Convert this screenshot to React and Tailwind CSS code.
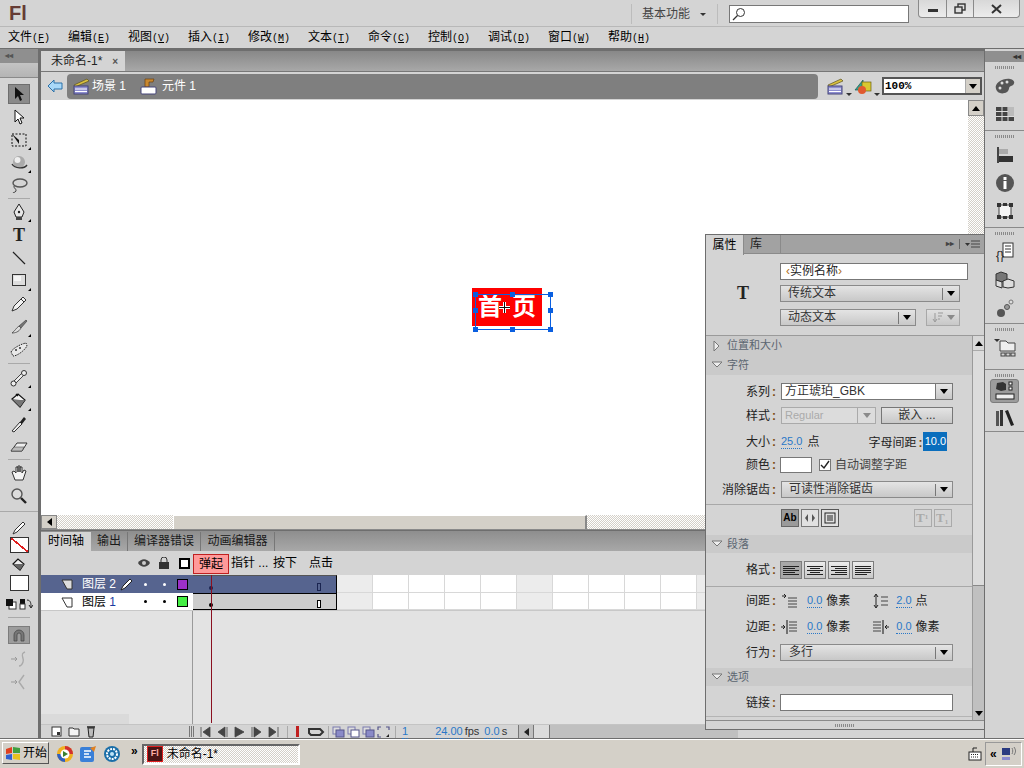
import React from 'react';

const FONT = '"Liberation Sans","Noto Sans CJK SC",sans-serif';
const dither = 'bg-[repeating-conic-gradient(#d4d0c8_0_25%,#ffffff_0_50%)] bg-[length:2px_2px]';

const I = ({ w = 20, h = 20, className = '', children }) => (
  <svg width={w} height={h} viewBox={`0 0 ${w} ${h}`} className={`shrink-0 ${className}`}>{children}</svg>
);

const Tool = ({ on, more, children }) => (
  <div className="relative h-[23px] w-[38px] flex items-center justify-center">
    <div className={`relative w-[22px] h-[20px] flex items-center justify-center ${on ? 'bg-[#8a8a8a] border border-[#6e6e6e]' : ''}`}>
      {children}
      {more && <span className="absolute right-[-1px] bottom-[0px] w-0 h-0 border-l-[3px] border-l-transparent border-b-[3px] border-b-black" />}
    </div>
  </div>
);

const ToolSep = ({ my = 'my-[1px]', w = 'mx-[8px]' }) => <div className={`h-px bg-[#a9a9a9] ${w} ${my}`} />;

const Menu = ({ t, k }) => (
  <div className="w-[60px] pl-[8px] text-[12px] leading-[20px] text-black whitespace-nowrap">
    {t}<span className="text-[10px] font-['Liberation_Mono']">(<span className="underline">{k}</span>)</span>
  </div>
);

const Clap = () => (
  <I w={20} h={18}>
    <path d="M2 8 L15 2 L17 4 L3 10Z" fill="#d8c040" stroke="#5a5020" strokeWidth=".7" />
    <rect x="2" y="9" width="14" height="8" fill="#8e8ed0" stroke="#45457a" />
    <path d="M3 12h12M3 14.5h12" stroke="#fff" />
  </I>
);

const Grip = () => <div className="h-[3px] w-[20px] mx-auto bg-[repeating-linear-gradient(90deg,#8a8a8a_0_1px,transparent_1px_2px)]" />;

const Caret = ({ dim }) => <span className={`w-0 h-0 border-l-[4px] border-r-[4px] border-t-[5px] border-l-transparent border-r-transparent ${dim ? 'border-t-[#8a8a8a]' : 'border-t-black'}`} />;

const Select = ({ label, w, dim, pl = 'pl-[7px]', bar = true }) => (
  <div className={`${w} h-[17px] flex items-center border border-[#8a8a8a] bg-gradient-to-b from-[#e4e4e4] to-[#c8c8c8]`}>
    <span className={`flex-1 ${pl} text-[12px] leading-[15px] whitespace-nowrap ${dim ? 'text-[#a8a8a8]' : 'text-[#333]'}`}>{label}</span>
    {bar && <span className="h-[12px] w-px bg-[#777]" />}
    <span className="w-[16px] flex justify-center"><Caret dim={dim} /></span>
  </div>
);

const Label = ({ children, w = 'w-[70px]' }) => (
  <span className={`${w} text-right text-[12px] leading-[16px] text-[#222] whitespace-nowrap`}>{children}<span className="ml-[2px] text-[#7a4a10] font-bold">:</span></span>
);

const Num = ({ children, className = '' }) => (
  <span className={`text-[11px] leading-[13px] text-[#2a78c8] border-b border-dotted border-[#2a78c8] ${className}`}>{children}</span>
);

const Section = ({ title, open = true, h = 'h-[18px]' }) => (
  <div className={`${h} bg-[#cacaca] flex items-center pl-[5px] gap-[4px]`}>
    <I w={12} h={12}>
      {open ? <path d="M1 3H11L6 8Z" fill="#eee" stroke="#777" /> : <path d="M3 1V11L8 6Z" fill="#eee" stroke="#777" />}
    </I>
    <span className="text-[11px] text-[#5b6570] whitespace-nowrap">{title}</span>
  </div>
);

const AlignBtn = ({ on, lines }) => (
  <div className={`w-[22px] h-[18px] border border-[#7c7c7c] flex flex-col items-center justify-center gap-[1px] ${on ? 'bg-[#a8a8a8]' : 'bg-gradient-to-b from-[#ececec] to-[#c8c8c8]'}`}>
    {lines.map((l, i) => <span key={i} className={`h-px bg-[#222] ${l}`} />)}
  </div>
);

const DockGroup = ({ className = '', gap = 'mb-[3px]', children }) => (
  <div className={`border-b border-[#8a8a8a] flex flex-col items-center pt-[4px] ${className}`}>
    <div className={gap}><Grip /></div>
    {children}
  </div>
);

const DockIcon = ({ on, children, h = 'h-[28px]' }) => (
  <div className={`${h} w-full flex items-center justify-center`}>
    <div className={`w-[29px] h-[24px] rounded-[3px] flex items-center justify-center ${on ? 'bg-[#9c9c9c] border border-[#7c7c7c]' : ''}`}>{children}</div>
  </div>
);

function Tools() {
  return (
    <div className="w-[38px] shrink-0 flex flex-col bg-[#d4d4d4] mr-[3px]">
      <div className="h-[14px] bg-[#8f8f8f] text-[#555] text-[8px] leading-[14px] pl-[5px] font-bold">◂◂</div>
      <div className="h-[15px] bg-gradient-to-b from-[#c4c4c4] to-[#b4b4b4] border-b border-[#8a8a8a] mb-[4px]" />
      <Tool on><I w={14} h={16}><path d="M3 1V13L6 10L8 15L10 14L8 9H12Z" fill="#111" /></I></Tool>
      <Tool><I w={14} h={16}><path d="M3 1V13L6 10L8 15L10 14L8 9H12Z" fill="#fff" stroke="#111" /></I></Tool>
      <Tool more><I w={18} h={16}><rect x="2" y="2" width="14" height="12" fill="none" stroke="#111" strokeDasharray="2 1.5" /><path d="M2 2L9 8V12Z" fill="#111" /></I></Tool>
      <Tool more><I w={18} h={16}><circle cx="9" cy="7" r="6" fill="#aaa" /><circle cx="7.5" cy="5" r="3" fill="#eee" /><path d="M2 9C5 14 14 14 17 10" stroke="#333" fill="none" strokeWidth="1.4" /></I></Tool>
      <Tool><I w={18} h={18}><ellipse cx="10" cy="6" rx="7" ry="4" fill="none" stroke="#555" strokeWidth="1.4" /><path d="M4 9C3 12 7 11 6 14C5 16 3 15 3 16" stroke="#444" fill="none" /></I></Tool>
      <ToolSep my="my-[1px]" />
      <Tool more><I w={16} h={18}><path d="M8 1L13 9L11 14H5L3 9Z" fill="#e8e8e8" stroke="#222" /><circle cx="8" cy="9" r="1.2" fill="#222" /><rect x="5" y="14" width="6" height="3" fill="#444" /></I></Tool>
      <Tool><span className="font-['Liberation_Serif'] font-bold text-[18px] leading-none text-[#222]">T</span></Tool>
      <Tool><I w={16} h={16}><path d="M2 2L14 14" stroke="#222" strokeWidth="1.2" /></I></Tool>
      <Tool more><I w={16} h={15}><rect x="1.5" y="1.5" width="13" height="11" fill="#ddd" stroke="#333" /><rect x="3" y="3" width="7" height="5" fill="#f4f4f4" /></I></Tool>
      <Tool><I w={18} h={18}><path d="M2 16L4 11L13 2L16 5L7 14Z" fill="#f2f2f2" stroke="#333" /><path d="M11 4L14 7" stroke="#333" /></I></Tool>
      <Tool more><I w={18} h={18}><path d="M9 8L16 2L17 3L11 10Z" fill="#777" stroke="#333" strokeWidth=".6" /><path d="M9 8L11 10C9 14 5 15 2 15C5 13 6 10 9 8Z" fill="#ddd" stroke="#333" strokeWidth=".7" /></I></Tool>
      <Tool><I w={20} h={18}><path d="M2 11C4 7 12 3 17 2L18 5C15 10 8 15 4 15Z" fill="#e8e8e8" stroke="#222" strokeDasharray="1.5 1" /><circle cx="7" cy="9" r="1" fill="#333" /><circle cx="11" cy="7" r="1" fill="#333" /></I></Tool>
      <ToolSep my="my-[2px]" />
      <Tool more><I w={18} h={18}><path d="M3 13L12 4M5 15L14 6" stroke="#333" strokeWidth="1" /><path d="M4 14L13 5" stroke="#eee" strokeWidth="2" /><circle cx="14" cy="4" r="2.5" fill="#eee" stroke="#333" /><circle cx="3.5" cy="14.5" r="2.5" fill="#eee" stroke="#333" /></I></Tool>
      <Tool more><I w={18} h={18}><path d="M2 7L8 2L15 8L10 15Z" fill="#f2f2f2" stroke="#111" strokeWidth="1.2" /><path d="M2 7L10 8L15 8L10 15Z" fill="#777" /><path d="M6 2L8 4" stroke="#111" strokeWidth="1.4" /></I></Tool>
      <Tool><I w={18} h={18}><path d="M2 16L10 7L12 9L4 17Z" fill="#eee" stroke="#333" /><path d="M10 7L14 2L16 4L12 9Z" fill="#222" /></I></Tool>
      <Tool><I w={18} h={14}><path d="M1 11L7 3H17L12 11Z" fill="#eee" stroke="#333" /><path d="M1 11L4 7H14L12 11Z" fill="#bbb" stroke="#333" strokeWidth=".5" /></I></Tool>
      <ToolSep my="my-[1px]" />
      <Tool><I w={18} h={18}><path d="M5 16L2 8L4 7L6 9V3L8 3V8V2L10 2V8V3L12 3V9L14 6L16 7L13 16Z" fill="#f4f4f4" stroke="#333" /></I></Tool>
      <Tool><I w={18} h={18}><circle cx="7" cy="7" r="5" fill="#ddd" stroke="#555" strokeWidth="1.4" /><path d="M11 11L16 16" stroke="#222" strokeWidth="2.4" /></I></Tool>
      <ToolSep my="my-[4px]" w="" />
      <Tool><I w={16} h={16}><path d="M2 14L4 10L12 2L14 4L6 12Z" fill="#fff" stroke="#333" /></I></Tool>
      <div className="h-[17px] flex items-center justify-center -mt-[3px]">
        <div className="w-[19px] h-[16px] border border-[#333] bg-[linear-gradient(to_top_right,#fff_46%,#e02020_46%,#e02020_54%,#fff_54%)]" />
      </div>
      <Tool><I w={16} h={16}><path d="M2 7L7 2L13 7L9 13Z" fill="#eee" stroke="#111" strokeWidth="1.2" /><path d="M2 7H13L9 13Z" fill="#666" /></I></Tool>
      <div className="h-[17px] flex items-center justify-center -mt-[2px]">
        <div className="w-[19px] h-[16px] border border-[#333] bg-white" />
      </div>
      <div className="h-[22px] flex items-center justify-center gap-[2px] mt-[2px]">
        <I w={12} h={12}><rect x="4" y="4" width="7" height="7" fill="#fff" stroke="#333" /><rect x="1" y="1" width="7" height="7" fill="#111" /></I>
        <I w={14} h={12}><rect x="1" y="1" width="5" height="5" fill="#111" /><rect x="1" y="6" width="5" height="5" fill="#fff" stroke="#333" /><path d="M8 2C12 2 12 6 12 9M12 10L10 7M12 10L14 7" stroke="#222" fill="none" /></I>
      </div>
      <ToolSep my="my-[2px]" />
      <div className="h-[18px] mt-[6px] flex items-center justify-center">
        <div className="w-[22px] h-[18px] bg-[#9c9c9c] border border-[#7c7c7c] flex items-center justify-center">
          <I w={14} h={14}><path d="M2 13V7A5 5 0 0 1 12 7V13H9V7A2 2 0 0 0 5 7V13Z" fill="#777" stroke="#444" strokeWidth=".7" /></I>
        </div>
      </div>
      <div className="h-[23px] flex items-center justify-center mt-[3px]"><I w={20} h={18}><path d="M2 9H8M6 7L8 9L6 11" stroke="#999" fill="none" /><path d="M16 2C10 4 16 9 14 12C13 15 11 16 10 16" stroke="#aaa" fill="none" strokeWidth="1.4" /></I></div>
      <div className="h-[23px] flex items-center justify-center"><I w={20} h={18}><path d="M2 9H8M6 7L8 9L6 11" stroke="#999" fill="none" /><path d="M15 2L10 9L15 16" stroke="#aaa" fill="none" strokeWidth="1.4" /></I></div>
    </div>
  );
}

function Dock() {
  return (
    <div className="w-[39px] shrink-0 bg-[#d4d4d4] flex flex-col self-stretch">
      <div className="h-[11px] mt-[2px] bg-[#8f8f8f] text-right pr-[3px] text-[8px] leading-[11px] text-[#333] font-bold">◂◂</div>
      <DockGroup className="h-[69px]">
        <DockIcon><I w={22} h={18}><path d="M2 12C0 6 9 1 16 2C22 3 21 8 17 9C14 10 16 13 13 15C8 18 3 16 2 12Z" fill="#555" /><circle cx="8" cy="6" r="1.5" fill="#ddd" /><circle cx="13" cy="5" r="1.5" fill="#ddd" /><circle cx="6" cy="11" r="1.5" fill="#ddd" /></I></DockIcon>
        <DockIcon><I w={18} h={14}><rect width="18" height="14" fill="#444" /><path d="M6 0V14M12 0V14M0 4.5H18M0 9.500H18" stroke="#ddd" /><rect x="12" y="0" width="6" height="9" fill="#bbb" /></I></DockIcon>
      </DockGroup>
      <DockGroup className="h-[97px]">
        <DockIcon><I w={18} h={18}><rect x="1" y="1" width="2" height="16" fill="#444" /><rect x="3" y="3" width="9" height="5" fill="#aaa" /><rect x="3" y="10" width="14" height="6" fill="#333" /></I></DockIcon>
        <DockIcon><I w={20} h={20}><circle cx="10" cy="10" r="9" fill="#555" /><rect x="8.500" y="8" width="3" height="8" fill="#fff" /><rect x="8.500" y="4" width="3" height="3" fill="#fff" /></I></DockIcon>
        <DockIcon><I w={18} h={18}><rect x="3" y="3" width="12" height="12" fill="#f4f4f4" stroke="#444" /><path d="M1 1h4v4h-4zM13 1h4v4h-4zM1 13h4v4h-4zM13 13h4v4h-4zM7 1h4v3h-4zM7 14h4v3h-4z" fill="#333" /></I></DockIcon>
      </DockGroup>
      <DockGroup className="h-[96px]">
        <DockIcon><I w={20} h={20}><rect x="8" y="1" width="10" height="14" fill="#fff" stroke="#333" /><path d="M10 4h6M10 7h6M10 10h6" stroke="#333" /><text x="1" y="18" fontSize="12" fill="#222">{'{}'}</text></I></DockIcon>
        <DockIcon><I w={20} h={18}><path d="M6 1L12 3V9L6 11L1 9V3Z" fill="#777" stroke="#333" /><path d="M1 9L7 11V17L1 15Z M8 10L13 8L19 10V16L13 17L8 16Z" fill="#ddd" stroke="#333" /></I></DockIcon>
        <DockIcon><I w={18} h={18}><circle cx="5" cy="14" r="4" fill="#555" /><circle cx="11" cy="8" r="2.500" fill="#999" stroke="#555" /><circle cx="15" cy="3" r="2" fill="#ddd" stroke="#777" /></I></DockIcon>
      </DockGroup>
      <DockGroup className="h-[46px]">
        <DockIcon><I w={22} h={20}><path d="M0 1H6L3 4Z" fill="#333" /><path d="M6 3H12L14 5H21V13H6Z" fill="#eee" stroke="#444" /><rect x="7" y="15" width="4" height="3" fill="none" stroke="#444" /><rect x="12" y="15" width="4" height="3" fill="none" stroke="#444" /><rect x="17" y="15" width="4" height="3" fill="none" stroke="#444" /></I></DockIcon>
      </DockGroup>
      <DockGroup className="h-[62px]" gap="">
        <DockIcon on><I w={24} h={20}><path d="M4 2L10 1L13 3V9L8 10L3 8Z" fill="#333" /><rect x="16" y="1" width="3" height="3" fill="#fff" stroke="#222" /><rect x="16" y="6" width="3" height="3" fill="#fff" stroke="#222" /><rect x="3" y="13" width="18" height="5" fill="#eee" stroke="#222" /></I></DockIcon>
        <DockIcon><I w={20} h={18}><rect x="1" y="2" width="3" height="15" fill="#555" /><rect x="5" y="1" width="3" height="16" fill="#333" /><path d="M10 2L13 1L19 16L16 17Z" fill="#222" /></I></DockIcon>
      </DockGroup>
    </div>
  );
}

const Cells = () => (
  <div className="flex-1 flex">
    {[0, 1, 2, 3, 4, 5, 6, 7, 8, 9, 10, 11].map((i) => (
      <div key={i} className={`w-[36px] shrink-0 border-r border-b border-[#d8d8d8] ${i % 5 === 0 ? 'bg-[#ececec]' : 'bg-white'}`} />
    ))}
  </div>
);

function Timeline() {
  return (
    <div className="flex-1 flex flex-col min-h-0 relative">
      <div className="h-[21px] shrink-0 flex items-end bg-gradient-to-b from-[#8e8e8e] to-[#a8a8a8] border-t border-[#6e6e6e]">
        <div className="w-[50px] h-[19px] bg-[#d4d4d4] text-center text-[12px] leading-[19px] text-black">时间轴</div>
        {[['输出', 'w-[37px]'], ['编译器错误', 'w-[73px]'], ['动画编辑器', 'w-[74px]']].map(([t, w]) => (
          <div key={t} className={`${w} h-[19px] border-r border-[#777] text-center text-[12px] leading-[19px] text-[#1a1a1a]`}>{t}</div>
        ))}
      </div>
      <div className="h-[24px] shrink-0 flex bg-[#d4d4d4]">
        <div className="w-[152px] relative flex items-center">
          <div className="ml-[97px] flex items-center gap-[8px]">
            <I w={12} h={10}><path d="M0 5C3 0 9 0 12 5C9 10 3 10 0 5Z" fill="#444" /><circle cx="6" cy="5" r="2" fill="#ccc" /></I>
            <I w={12} h={12}><rect x="1" y="5" width="10" height="7" fill="#333" /><path d="M3 5V3A3 3 0 0 1 9 3V5" stroke="#333" fill="none" /></I>
            <span className="w-[11px] h-[11px] border-2 border-black bg-white ml-[1px]" />
          </div>
        </div>
        <div className="flex-1 flex items-center text-[12px] text-black whitespace-nowrap">
          <div className="w-[36px] h-[20px] bg-[#ff9a9a] border border-[#c02020] text-center leading-[18px] mt-[1px]">弹起</div>
          <div className="w-[44px] pl-[2px]">指针 ...</div>
          <div className="w-[36px]">按下</div>
          <div className="w-[36px]">点击</div>
        </div>
      </div>
      <div className="h-[18px] shrink-0 flex">
        <div className="w-[152px] bg-[#56648f] flex items-center text-white text-[12px] pl-[20px]">
          <I w={12} h={12}><path d="M1 2H11V11H6Z" fill="#ddd" stroke="#333" /></I>
          <span className="ml-[9px] w-[38px] whitespace-nowrap">图层 2</span>
          <I w={14} h={14}><path d="M1 13L3 9L10 2L12 4L5 11Z" fill="#fff" stroke="#222" /></I>
          <span className="ml-[10px] w-[3px] h-[3px] rounded-full bg-white" />
          <span className="ml-[16px] w-[3px] h-[3px] rounded-full bg-white" />
          <span className="ml-[11px] w-[11px] h-[11px] bg-[#9b30c8] border border-black" />
        </div>
        <div className="flex-1 flex">
          <div className="w-[144px] relative bg-[#56648f] border-r border-black border-t border-t-[#555]">
            <span className="absolute left-[16px] top-[10px] w-[4px] h-[4px] rounded-full bg-[#1a2450]" />
            <span className="absolute left-[124px] top-[7px] w-[4px] h-[8px] border border-[#1a2450]" />
          </div>
          <Cells />
        </div>
      </div>
      <div className="h-[18px] shrink-0 flex border-b border-[#c8c8c8]">
        <div className="w-[152px] bg-white flex items-center text-black text-[12px] pl-[20px]">
          <I w={12} h={12}><path d="M1 2H11V11H6Z" fill="#fff" stroke="#333" /></I>
          <span className="ml-[9px] w-[38px] whitespace-nowrap">图层 <span className="text-[#1a3aa0]">1</span></span>
          <span className="w-[14px]" />
          <span className="ml-[10px] w-[3px] h-[3px] rounded-full bg-black" />
          <span className="ml-[16px] w-[3px] h-[3px] rounded-full bg-black" />
          <span className="ml-[11px] w-[11px] h-[11px] bg-[#44ee44] border border-black" />
        </div>
        <div className="flex-1 flex">
          <div className="w-[144px] relative bg-[#cccccc] border border-l-0 border-black">
            <span className="absolute left-[16px] top-[9px] w-[4px] h-[4px] rounded-full bg-black" />
            <span className="absolute left-[124px] top-[6px] w-[4px] h-[8px] bg-white border border-black" />
          </div>
          <Cells />
        </div>
      </div>
      <div className="flex-1 flex bg-[#e3e3e3]">
        <div className="w-[152px] border-r border-[#9a9a9a] flex flex-col justify-end">
          <div className="w-[88px] h-[10px] bg-[#dadada]" />
        </div>
      </div>
      <div className="h-[14px] shrink-0 flex items-center bg-[#d4d4d4] border-t border-[#c4c4c4]">
        <div className="w-[158px] flex items-center pl-[10px] gap-[6px]">
          <I w={11} h={11}><rect x="1" y="1" width="9" height="9" fill="#fff" stroke="#333" /><rect x="6" y="6" width="3" height="3" fill="#333" /></I>
          <I w={12} h={11}><path d="M1 2H5L6 3H11V10H1Z" fill="#f4f4f4" stroke="#333" /></I>
          <I w={10} h={13}><path d="M2 3H8L7 12H3Z" fill="#bbb" stroke="#222" /><path d="M1 2H9" stroke="#222" strokeWidth="1.5" /></I>
          <div className="ml-[87px] w-[6px] h-[11px] bg-[repeating-linear-gradient(90deg,#777_0_1px,transparent_1px_2px)]" />
        </div>
        <div className="flex items-center gap-[4px]">
          {['M2 1V11M11 1V11L4 6Z', 'M11 1V11M2 6L9 1V11Z', 'M2 1L11 6L2 11Z', 'M2 1V11M4 1L11 6L4 11Z', 'M11 1V11M2 1L9 6L2 11Z'].map((d) => (
            <I key={d} w={13} h={12}><path d={d} fill="#444" stroke="#444" strokeWidth=".8" /></I>
          ))}
        </div>
        <div className="ml-[7px] w-px h-[12px] bg-[#aaa]" />
        <div className="ml-[8px] w-[3px] h-[11px] bg-[#c02020]" />
        <I w={20} h={12} className="ml-[7px]"><path d="M3 3H14L17 6L14 9H5L3 7Z" fill="none" stroke="#333" strokeWidth="2" /></I>
        <div className="ml-[2px] w-px h-[12px] bg-[#aaa]" />
        <div className="ml-[3px] flex items-center gap-[2px]">
          {['#8a8ac8', '#ffffff', '#8a8ac8'].map((c, i) => (
            <I key={i} w={13} h={12}><rect x="1" y="1" width="7" height="7" fill="#ddd" stroke="#7a7ab0" /><rect x="4" y="4" width="8" height="7" fill={c} stroke="#55558a" /></I>
          ))}
          <I w={13} h={12}><path d="M1 4V1H4M9 1H12V4M1 8V11H4" fill="none" stroke="#55558a" strokeWidth="1.2" /><path d="M12 11V8L9 11Z" fill="#222" /></I>
        </div>
        <div className="ml-[5px] w-px h-[12px] bg-[#aaa]" />
        <Num className="ml-[6px]">1</Num>
        <Num className="ml-[27px]">24.00</Num>
        <span className="ml-[2px] text-[11px] text-[#333]">fps</span>
        <Num className="ml-[5px]">0.0</Num>
        <span className="ml-[2px] text-[11px] text-[#333]">s</span>
        <div className="ml-[11px] h-full w-[220px] flex bg-[#c0c0c0] border-l border-[#777]">
          <div className="w-[15px] flex items-center justify-center border-r border-[#777]"><span className="w-0 h-0 border-t-[4px] border-b-[4px] border-r-[5px] border-t-transparent border-b-transparent border-r-[#222]" /></div>
          <div className="w-[16px] bg-[#dcdcdc] border-r border-[#777]" />
        </div>
      </div>
      <div className="absolute left-[170px] top-[45px] bottom-[15px] w-px bg-[#8a1020]" />
    </div>
  );
}

function Stage() {
  return (
    <div className="relative flex-1 bg-white min-h-0">
      <div className="absolute left-[431px] top-[188px] w-[70px] h-[38px] bg-[#ff0000] flex items-center justify-center text-white font-bold text-[24px] gap-[10px] leading-none">
        <span>首</span><span>页</span>
      </div>
      <div className="absolute left-[434px] top-[194px] w-[76px] h-[36px] border border-[#0a5fe0]">
        {['-left-[3px] -top-[3px]', 'left-[34px] -top-[3px]', '-right-[3px] -top-[3px]', '-left-[3px] top-[13px]', '-right-[3px] top-[13px]', '-left-[3px] -bottom-[3px]', 'left-[34px] -bottom-[3px]', '-right-[3px] -bottom-[3px]'].map((p) => (
          <span key={p} className={`absolute w-[5px] h-[5px] bg-[#0a5fe0] ${p}`} />
        ))}
        <I w={11} h={11} className="absolute left-[23px] top-[7px]"><path d="M5.500 0V11M0 5.500H11" stroke="#fff" strokeWidth="3" /><path d="M5.500 0V11M0 5.500H11" stroke="#111" /></I>
      </div>
    </div>
  );
}

function Panel() {
  return (
    <div className="absolute left-[705px] top-[234px] w-[280px] h-[496px] border border-[#6e6e6e] bg-[#d4d4d4] flex flex-col">
      <div className="h-[19px] bg-[#a2a2a2] flex items-stretch border-b border-[#8a8a8a] shrink-0">
        <div className="w-[38px] bg-[#d4d4d4] text-center text-[12px] leading-[20px] text-black h-[20px] border-r border-[#8a8a8a]">属性</div>
        <div className="w-[37px] pl-[6px] text-[12px] leading-[19px] text-[#222] border-r border-[#8a8a8a]">库</div>
        <div className="flex-1 flex items-center justify-end pr-[3px] gap-[5px]">
          <span className="text-[8px] text-[#444] font-bold">▸▸</span>
          <span className="w-px h-[10px] bg-[#666]" />
          <I w={16} h={9}><path d="M0 3H5L2.500 6Z" fill="#333" /><path d="M6 1H15M6 4H15M6 7H15" stroke="#444" /></I>
        </div>
      </div>
      <div className="h-[82px] shrink-0 flex border-b border-[#9a9a9a]">
        <div className="w-[74px] flex items-center justify-center font-['Liberation_Serif'] font-bold text-[18px] pb-[2px] text-[#222]">T</div>
        <div className="flex-1 flex flex-col pt-[9px]">
          <div className="w-[188px] h-[17px] bg-white border border-[#777] text-[12px] leading-[15px] pl-[5px] text-[#222]"><span className="text-[#b07020]">‹</span>实例名称<span className="text-[#b07020]">›</span></div>
          <div className="mt-[5px]"><Select label="传统文本" w="w-[180px]" /></div>
          <div className="mt-[7px] flex items-center gap-[10px]">
            <Select label="动态文本" w="w-[136px]" />
            <div className="w-[34px] h-[17px] border border-[#a8a8a8] bg-gradient-to-b from-[#e0e0e0] to-[#c8c8c8] flex items-center justify-center gap-[3px]">
              <I w={12} h={11}><path d="M3 1V9M1 7L3 10L5 7M6 1H11M6 4H10M6 7H8" stroke="#999" fill="none" /></I>
              <Caret dim />
            </div>
          </div>
        </div>
      </div>
      <div className="flex-1 flex min-h-0">
        <div className="flex-1 min-w-0 flex flex-col">
          <Section title="位置和大小" open={false} h="h-[19px]" />
          <Section title="字符" h="h-[20px]" />
          <div className="flex items-center mt-[8px] h-[17px]">
            <Label>系列</Label>
            <div className="ml-[5px] w-[172px] h-[17px] flex border border-[#777] bg-white">
              <span className="flex-1 pl-[3px] text-[12px] leading-[15px] text-[#333]">方正琥珀_GBK</span>
              <span className="w-[17px] border-l border-[#777] bg-gradient-to-b from-[#e6e6e6] to-[#c8c8c8] flex items-center justify-center"><Caret /></span>
            </div>
          </div>
          <div className="flex items-center mt-[7px] h-[17px]">
            <Label>样式</Label>
            <div className="ml-[5px] w-[95px] h-[17px] flex border border-[#aaa] bg-[#dcdcdc]">
              <span className="flex-1 pl-[3px] text-[11px] leading-[15px] text-[#aaa]">Regular</span>
              <span className="w-[18px] border-l border-[#aaa] flex items-center justify-center"><Caret dim /></span>
            </div>
            <div className="ml-[5px] w-[72px] h-[17px] border border-[#777] bg-gradient-to-b from-[#e4e4e4] to-[#c8c8c8] text-center text-[12px] leading-[15px] text-[#333]">嵌入 ...</div>
          </div>
          <div className="flex items-center mt-[8px] h-[19px]">
            <Label>大小</Label>
            <Num className="ml-[5px]">25.0</Num>
            <span className="ml-[5px] text-[12px] text-[#222]">点</span>
            <span className="ml-[49px]"><Label w="w-[54px]">字母间距</Label></span>
            <span className="ml-px w-[24px] h-[19px] bg-[#0a6ebd] text-white text-[11px] leading-[19px] text-center">10.0</span>
          </div>
          <div className="flex items-center mt-[6px] h-[16px]">
            <Label>颜色</Label>
            <div className="ml-[4px] w-[32px] h-[16px] bg-white border border-[#777]" />
            <div className="ml-[7px] w-[12px] h-[12px] bg-white border border-[#777] flex items-center justify-center">
              <I w={10} h={10}><path d="M1 5L4 8L9 1" stroke="#222" strokeWidth="1.4" fill="none" /></I>
            </div>
            <span className="ml-[4px] text-[12px] text-[#444] whitespace-nowrap">自动调整字距</span>
          </div>
          <div className="flex items-center mt-[8px] h-[17px]">
            <Label>消除锯齿</Label>
            <div className="ml-[5px]"><Select label="可读性消除锯齿" w="w-[172px]" /></div>
          </div>
          <div className="h-px bg-[#a8a8a8] mt-[6px]" />
          <div className="flex items-center h-[30px] pl-[75px] pb-[4px]">
            <div className="flex gap-[2px]">
              <div className="w-[18px] h-[18px] bg-[#9a9a9a] border border-[#666] text-[10px] font-bold leading-[16px] text-center text-black">Ab</div>
              <div className="w-[18px] h-[18px] bg-[#e0e0e0] border border-[#777] flex items-center justify-center"><I w={12} h={10}><path d="M4 1L1 5L4 9ZM8 1L11 5L8 9Z" fill="#555" /></I></div>
              <div className="w-[18px] h-[18px] bg-[#e0e0e0] border border-[#555] flex items-center justify-center"><I w={12} h={12}><rect x="1" y="1" width="10" height="10" fill="none" stroke="#222" /><path d="M3 4H9M3 6H9M3 8H9" stroke="#222" /></I></div>
            </div>
            <div className="ml-[75px] flex gap-[2px]">
              <div className="w-[18px] h-[18px] border border-[#aaa] font-['Liberation_Serif'] font-bold text-[#aaa] text-[13px] leading-[16px] pl-px">T<sup className="text-[7px]">1</sup></div>
              <div className="w-[18px] h-[18px] border border-[#aaa] font-['Liberation_Serif'] font-bold text-[#aaa] text-[13px] leading-[16px] pl-px">T<sub className="text-[7px]">1</sub></div>
            </div>
          </div>
          <Section title="段落" />
          <div className="flex items-center mt-[8px] h-[18px]">
            <Label>格式</Label>
            <div className="ml-[4px] flex gap-[2px]">
              <AlignBtn on lines={['w-[16px]', 'w-[12px] mr-[4px]', 'w-[16px]', 'w-[12px] mr-[4px]', 'w-[16px]']} />
              <AlignBtn lines={['w-[16px]', 'w-[10px]', 'w-[16px]', 'w-[10px]', 'w-[16px]']} />
              <AlignBtn lines={['w-[16px]', 'w-[12px] ml-[4px]', 'w-[16px]', 'w-[12px] ml-[4px]', 'w-[16px]']} />
              <AlignBtn lines={['w-[16px]', 'w-[16px]', 'w-[16px]', 'w-[16px]', 'w-[12px] mr-[4px]']} />
            </div>
          </div>
          <div className="h-px bg-[#a8a8a8] mt-[7px]" />
          <div className="flex items-center mt-[5px] h-[18px]">
            <Label>间距</Label>
            <I w={18} h={14} className="ml-[5px]"><path d="M1 2H4M3 0L5 2L3 4" stroke="#222" fill="none" /><path d="M7 4H16M7 7H16M7 10H16M7 13H16" stroke="#444" /></I>
            <Num className="ml-[8px]">0.0</Num>
            <span className="ml-[4px] text-[12px] text-[#222] w-[44px] whitespace-nowrap">像素</span>
            <I w={16} h={14} className="ml-[3px]"><path d="M3 1V13M1 3L3 0L5 3M1 11L3 14L5 11" stroke="#222" fill="none" /><path d="M8 3H15M8 7H15M8 11H15" stroke="#444" /></I>
            <Num className="ml-[7px]">2.0</Num>
            <span className="ml-[4px] text-[12px] text-[#222]">点</span>
          </div>
          <div className="flex items-center mt-[8px] h-[18px]">
            <Label>边距</Label>
            <I w={18} h={14} className="ml-[5px]"><path d="M0 7H4M2 5L4 7L2 9" stroke="#222" fill="none" /><path d="M6 0V14" stroke="#111" /><path d="M8 2H16M8 5H16M8 8H16M8 11H16" stroke="#444" /></I>
            <Num className="ml-[8px]">0.0</Num>
            <span className="ml-[4px] text-[12px] text-[#222] w-[44px] whitespace-nowrap">像素</span>
            <I w={16} h={14} className="ml-[3px]"><path d="M0 2H8M0 5H8M0 8H8M0 11H8" stroke="#444" /><path d="M10 0V14" stroke="#111" /><path d="M16 7H12M14 5L12 7L14 9" stroke="#222" fill="none" /></I>
            <Num className="ml-[7px]">0.0</Num>
            <span className="ml-[4px] text-[12px] text-[#222] whitespace-nowrap">像素</span>
          </div>
          <div className="flex items-center mt-[8px] h-[17px]">
            <Label>行为</Label>
            <div className="ml-[4px]"><Select label="多行" pl="pl-[8px]" w="w-[173px]" /></div>
          </div>
          <div className="mt-[7px]"><Section title="选项" /></div>
          <div className="flex items-center mt-[8px] h-[17px]">
            <Label>链接</Label>
            <div className="ml-[4px] w-[173px] h-[17px] bg-white border border-[#777]" />
          </div>
          <div className="h-px bg-[#b4b4b4] mt-[5px]" />
        </div>
        <div className="w-[12px] shrink-0 flex flex-col bg-[#c0c0c0] border-l border-[#9a9a9a]">
          <div className="h-[15px] bg-[#d8d8d8] border-b border-[#aaa] flex items-center justify-center"><span className="w-0 h-0 border-l-[4px] border-r-[4px] border-b-[5px] border-l-transparent border-r-transparent border-b-black" /></div>
          <div className="h-[235px] bg-[#dcdcdc] border-b border-[#888]" />
          <div className="flex-1" />
          <div className="h-[14px] flex items-center justify-center"><Caret /></div>
        </div>
      </div>
      <div className="h-[9px] shrink-0 border-t border-[#8a8a8a] flex items-center justify-center">
        <div className="h-[3px] w-[20px] bg-[repeating-linear-gradient(90deg,#8a8a8a_0_1px,transparent_1px_2px)]" />
      </div>
    </div>
  );
}

export default function App() {
  return (
    <div className="relative w-[1024px] h-[768px] overflow-hidden flex flex-col bg-[#d4d4d4]" style={{ fontFamily: FONT }}>
      {/* title bar */}
      <div className="h-[27px] shrink-0 flex items-start border-b border-[#b8b8b8]">
        <div className="w-[631px] pl-[9px] pt-[1px] text-[#663c35] font-bold text-[20px] leading-[24px]">Fl</div>
        <div className="mt-[4px] h-[20px] w-[87px] border-x border-[#bcbcbc] flex items-center pl-[10px] text-[12px] text-[#444]">
          基本功能
          <span className="ml-[10px] w-0 h-0 border-l-[3px] border-r-[3px] border-t-[3px] border-l-transparent border-r-transparent border-t-[#333]" />
        </div>
        <div className="ml-[11px] mt-[5px] w-[180px] h-[18px] bg-white border border-[#777] flex items-center pl-[2px]">
          <I w={14} h={14}><circle cx="8.500" cy="5.500" r="4" fill="none" stroke="#333" /><path d="M5.500 8.500L1 13" stroke="#333" strokeWidth="1.300" /></I>
        </div>
        <div className="ml-[9px] w-[102px] h-[18px] flex border border-t-0 border-[#8a8a8a] rounded-b-[4px] bg-gradient-to-b from-[#d8d8d8] to-[#ececec]">
          <div className="w-[28px] border-r border-[#8a8a8a] flex items-center justify-center pt-[4px]"><span className="w-[10px] h-[3px] bg-[#333]" /></div>
          <div className="w-[27px] border-r border-[#8a8a8a] flex items-center justify-center">
            <I w={12} h={11}><rect x="4" y="1" width="7" height="6" fill="none" stroke="#333" strokeWidth="1.400" /><rect x="1" y="4" width="7" height="6" fill="#ddd" stroke="#333" strokeWidth="1.400" /></I>
          </div>
          <div className="flex-1 flex items-center justify-center"><I w={11} h={10}><path d="M1 1L10 9M10 1L1 9" stroke="#333" strokeWidth="2" /></I></div>
        </div>
      </div>
      {/* menu bar */}
      <div className="h-[21px] shrink-0 flex">
        {[['文件', 'F'], ['编辑', 'E'], ['视图', 'V'], ['插入', 'I'], ['修改', 'M'], ['文本', 'T'], ['命令', 'C'], ['控制', 'O'], ['调试', 'D'], ['窗口', 'W'], ['帮助', 'H']].map(([t, k]) => (
          <Menu key={t} t={t} k={k} />
        ))}
      </div>
      {/* workspace */}
      <div className="flex-1 flex min-h-0 bg-[#6e6e6e] pt-px pb-px">
        <Tools />
        <div className="w-[943px] shrink-0 mt-[2px] mr-px flex flex-col min-h-0 bg-[#d4d4d4]">
          <div className="h-[21px] shrink-0 flex items-end bg-gradient-to-b from-[#888888] to-[#a8a8a8] border-b border-[#777]">
            <div className="w-[84px] h-[20px] bg-[#d4d4d4] flex items-center pl-[10px] text-[12px] text-[#222] whitespace-nowrap">
              未命名-1*
              <span className="ml-[10px] text-[10px] font-bold text-[#555]">×</span>
            </div>
          </div>
          <div className="h-[28px] shrink-0 flex items-center">
            <I w={16} h={14} className="ml-[6px]"><path d="M7 1L1 7L7 13V10H15V4H7Z" fill="#a8d8f8" stroke="#2a70a8" /></I>
            <div className="ml-[4px] w-[751px] h-[25px] rounded-[4px] bg-[#7f7f7f] flex items-center pl-[5px] text-white text-[12px] whitespace-nowrap">
              <Clap /><span>场景 1</span>
              <I w={20} h={18} className="ml-[13px]"><path d="M6 2H15L14 5H10V10H6Z" fill="#c88830" stroke="#6a4010" strokeWidth=".7" /><rect x="2" y="10" width="15" height="7" rx="1" fill="#fff" stroke="#45457a" /></I>
              <span className="ml-[3px]">元件 1</span>
            </div>
            <div className="ml-[8px]"><Clap /></div>
            <span className="w-0 h-0 self-end mb-[4px] border-l-[3px] border-r-[3px] border-t-[3px] border-l-transparent border-r-transparent border-t-[#333]" />
            <I w={20} h={18} className="ml-[2px]"><path d="M1 13L9 3V13Z" fill="#30a090" stroke="#205a50" strokeWidth=".7" /><rect x="8" y="5" width="9" height="9" fill="#d8c830" stroke="#6a6010" strokeWidth=".7" /><circle cx="8" cy="13" r="4" fill="#e05a30" /></I>
            <span className="w-0 h-0 self-end mb-[4px] border-l-[3px] border-r-[3px] border-t-[3px] border-l-transparent border-r-transparent border-t-[#333]" />
            <div className="ml-[2px] w-[100px] h-[18px] bg-white border-2 border-[#555] flex items-center">
              <span className="flex-1 pl-[1px] font-['Liberation_Mono'] font-bold text-[11px] text-black">100%</span>
              <span className="w-[15px] h-full bg-[#d4d0c8] border-l border-[#aaa] flex items-center justify-center"><Caret /></span>
            </div>
          </div>
          <div className="flex-1 min-h-0 flex flex-col">
            <div className="h-[415px] shrink-0 flex">
              <Stage />
              <div className={`w-[16px] shrink-0 flex flex-col ${dither}`}>
                <div className="h-[16px] bg-[#d4d0c8] border border-[#888] flex items-center justify-center"><span className="w-0 h-0 border-l-[4px] border-r-[4px] border-b-[5px] border-l-transparent border-r-transparent border-b-black" /></div>
              </div>
            </div>
            <div className={`h-[15px] shrink-0 flex ${dither} border-b border-[#8a8a8a]`}>
              <div className="w-[16px] bg-[#d4d0c8] border border-[#888] flex items-center justify-center"><span className="w-0 h-0 border-t-[4px] border-b-[4px] border-r-[5px] border-t-transparent border-b-transparent border-r-black" /></div>
              <div className="ml-[116px] w-[414px] bg-[#d4d0c8] border-l border-t border-white border-r-2 border-r-[#888]" />
            </div>
            <Timeline />
          </div>
        </div>
        <Dock />
      </div>
      {/* taskbar */}
      <div className="h-[29px] shrink-0 bg-[#d4d0c8] border-t border-white flex items-center">
        <div className="ml-[2px] mb-[2px] w-[47px] h-[22px] bg-[#d4d0c8] border border-t-white border-l-white border-r-[#555] border-b-[#555] flex items-center pl-[2px] text-[12px] text-black whitespace-nowrap">
          <I w={16} h={15}><path d="M1 3L7 1V7L1 8Z" fill="#e04020" /><path d="M8 1L15 2V7L8 7Z" fill="#40a040" /><path d="M1 9L7 8V14L1 13Z" fill="#3060d0" /><path d="M8 8H15V14L8 13Z" fill="#e8c020" /></I>
          <span className="ml-[2px]">开始</span>
        </div>
        <I w={18} h={18} className="ml-[7px]"><circle cx="9" cy="9" r="8" fill="#f0b020" /><path d="M9 1A8 8 0 0 1 17 9L9 9Z" fill="#d03030" /><path d="M9 17A8 8 0 0 1 1 9L9 9Z" fill="#3060c0" /><circle cx="9" cy="9" r="4.500" fill="#fff" /><path d="M7 6L12 9L7 12Z" fill="#3a8030" /></I>
        <I w={18} h={18} className="ml-[5px]"><rect x="1" y="2" width="14" height="15" rx="2" fill="#3a80d8" /><path d="M5 6H12M5 9H10M5 12H12" stroke="#fff" strokeWidth="1.400" /><path d="M11 3L17 1L15 7Z" fill="#e08020" /></I>
        <I w={18} h={18} className="ml-[6px]"><circle cx="9" cy="9" r="8" fill="#1a6ea8" /><circle cx="9" cy="9" r="5" fill="none" stroke="#fff" strokeWidth="2" strokeDasharray="2 1" /><circle cx="9" cy="9" r="2" fill="#bfe4f8" /></I>
        <span className="ml-[10px] mb-[6px] text-[12px] font-bold leading-none text-black">»</span>
        <div className={`ml-[4px] w-[158px] h-[21px] border-2 border-t-[#666] border-l-[#666] border-r-white border-b-white flex items-center pl-[3px] text-[12px] text-black ${dither}`}>
          <div className="w-[16px] h-[16px] bg-[#4a1414] border border-[#e02020] text-center text-[9px] leading-[13px] font-bold text-[#ffb0a8]">Fl</div>
          <span className="ml-[4px] whitespace-nowrap">未命名-1*</span>
        </div>
        <div className="flex-1" />
        <I w={14} h={14} className="mr-[3px]"><rect x="1" y="5" width="12" height="8" fill="#fff" stroke="#222" /><path d="M3 7.500H11M3 10H11" stroke="#222" strokeDasharray="1 1" /><path d="M5 5V1H9" stroke="#222" fill="none" /></I>
        <div className="mr-[2px] w-[37px] h-[24px] border border-t-[#999] border-l-[#999] border-r-white border-b-white flex items-center pl-[4px] gap-[3px]">
          <span className="text-[12px] font-bold leading-none text-black">«</span>
          <I w={16} h={16}><rect x="2" y="2" width="8" height="7" fill="#2a3a80" /><rect x="2" y="11" width="8" height="3" fill="#8a8ad0" /><path d="M12 2C13 4 13 6 12 8M14 1C16 4 16 6 14 9" stroke="#777" fill="none" /></I>
        </div>
      </div>
      <Panel />
    </div>
  );
}
